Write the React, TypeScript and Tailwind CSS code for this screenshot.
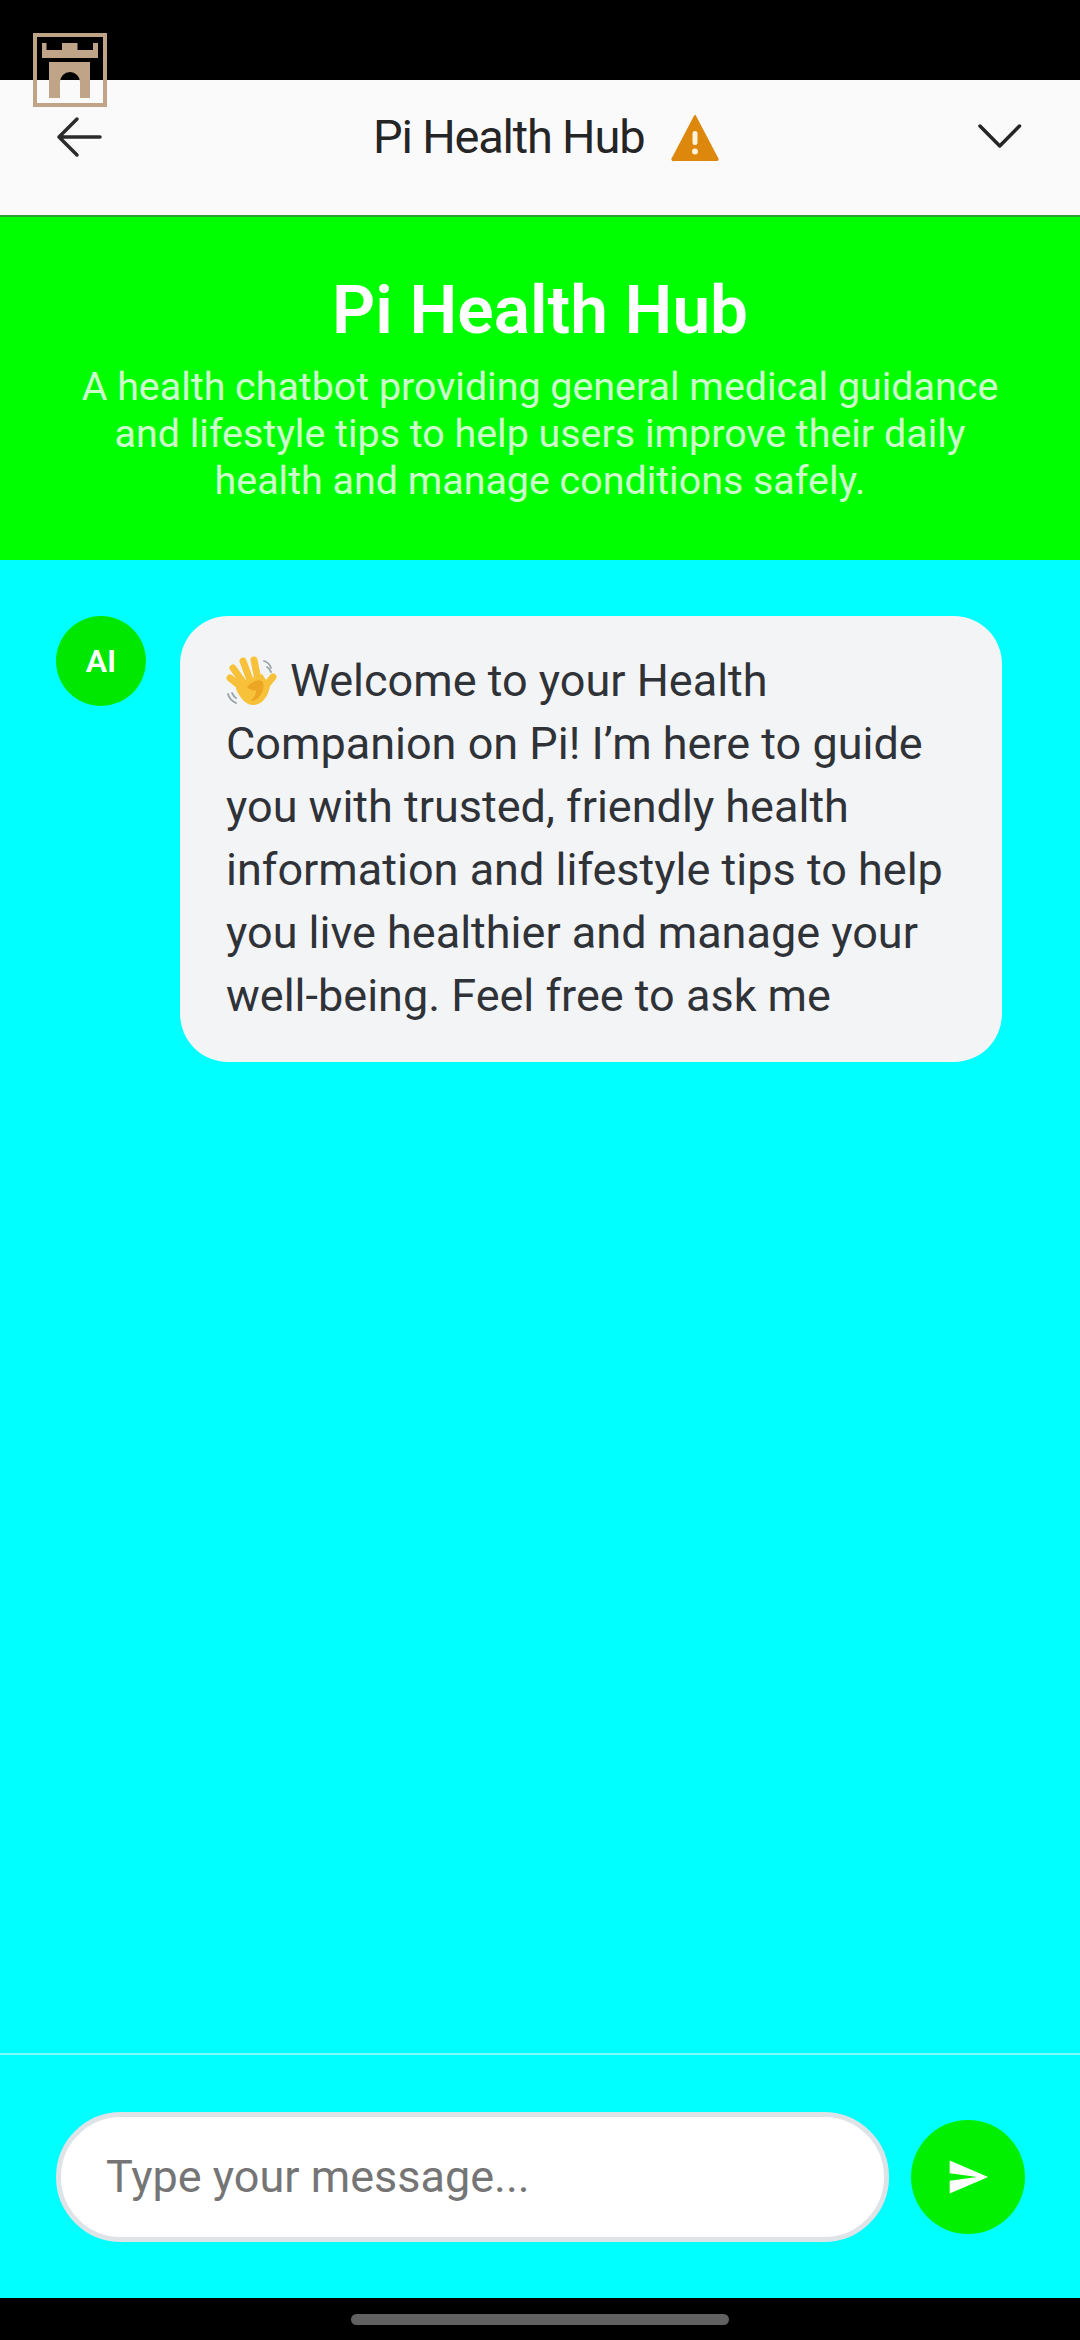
import React from 'react';

const roboto = "font-['Roboto',sans-serif]";

function CastleLogo() {
    return (
        <svg className="absolute left-[33px] top-[33px]" width="74" height="74" viewBox="0 0 74 74">
            <rect x="2" y="2" width="70" height="70" fill="none" stroke="#c0a488" strokeWidth="4" />
            <path d="M9 10h4.500v7H29v-7h15.500v7H60v-7h5v15H9z" fill="#c0a488" />
            <path d="M16 29h41v36H47V49a10 10 0 0 0-20 0v16H16z" fill="#c0a488" />
        </svg>
    );
}

function WaveEmoji() {
    return (
        <svg className="inline-block align-[-11px] mr-[12px]" width="52" height="51" viewBox="0 0 52 51">
            <path
                d="M38 5c3 1 6 3 7 7M41 11c2 1 3 3 4 5M2 38c1 4 4 7 8 9M6 37c1 2 2 4 4 5"
                fill="none"
                stroke="#9aa3a8"
                strokeWidth="1.800"
                strokeLinecap="round"
            />
            <g fill="none" stroke="#f8c13a" strokeWidth="7" strokeLinecap="round">
                <path d="M28 4l4 20M17 5l7 19M7 12l10 14M4 22l11 9" />
                <path d="M47 21l-9 11" />
            </g>
            <path d="M12 27 36 18l8 12c-2 12-9 19-17 19-7 0-13-7-17-16z" fill="#f8c13a" />
            <path d="M21 31c5-5 10-8 15-6 3 4 1 12-3 16-3 3-6 4-8 4 3-3 5-7 5-11-3 1-6 0-9-3z" fill="#eda524" />
        </svg>
    );
}

export default function App() {
    return (
        <div className={`relative flex flex-col h-[2340px] w-[1080px] overflow-hidden bg-black ${roboto}`}>
            <CastleLogo />

            <div className="h-[80px] shrink-0" />

            <header className="h-[137px] shrink-0 flex items-center pb-[22px] bg-[#fafafa] border-b-2 border-[#2e9e2e]">
                <svg className="ml-[56px]" width="46" height="42" viewBox="0 0 46 42" fill="none" stroke="#2b2b2b" strokeWidth="3.500" strokeLinecap="round" strokeLinejoin="round">
                    <path d="M44 21H3M21 3 3 21l18 18" />
                </svg>
                <span className="ml-[271px] w-[272px] whitespace-nowrap text-[47px] leading-none font-normal tracking-[-1.200px] text-[#252525]">Pi Health Hub</span>
                <svg className="ml-[25px] mt-[3px]" width="50" height="50" viewBox="0 0 50 50">
                    <path d="M25 3 47 45a1 1 0 0 1-1 2H4a1 1 0 0 1-1-2z" fill="#dd870c" stroke="#dd870c" strokeWidth="2" strokeLinejoin="round" />
                    <rect x="22.500" y="18" width="5" height="14" rx="2.500" fill="#fff3dc" />
                    <circle cx="25" cy="38.500" r="3" fill="#fff3dc" />
                </svg>
                <svg className="ml-[257px]" width="46" height="28" viewBox="0 0 46 28" fill="none" stroke="#252525" strokeWidth="3.500" strokeLinecap="round" strokeLinejoin="round">
                    <path d="M3 3l19.750 20L42.500 3" />
                </svg>
            </header>

            <section className="h-[343px] shrink-0 bg-[#00ff00] text-white text-center flex flex-col items-center pt-[53px]">
                <h1 className="text-[67.500px] leading-[80px] font-semibold">Pi Health Hub</h1>
                <p className="mt-[13px] w-[960px] text-[39.400px] leading-[47px] text-white/80">
                    A health chatbot providing general medical guidance and lifestyle tips to help users improve their daily health and manage conditions safely.
                </p>
            </section>

            <main className="flex-1 flex items-start gap-[34px] bg-[#00ffff] pl-[56px] pt-[56px]">
                <div className="w-[90px] h-[90px] shrink-0 rounded-full bg-[#00e800] flex items-center justify-center text-white text-[32px] font-semibold">
                    AI
                </div>
                <div className="w-[822px] rounded-[48px] bg-[#f3f4f6] px-[46px] pt-[33px] pb-[35px] text-[45px] leading-[63px] text-[#2f3237]">
                    <WaveEmoji />
                    Welcome to your Health Companion on Pi! I’m here to guide you with trusted, friendly health information and lifestyle tips to help you live healthier and manage your well-being. Feel free to ask me
                </div>
            </main>

            <footer className="h-[245px] shrink-0 flex items-center gap-[22px] bg-[#00ffff] pl-[56px] border-t-2 border-[#7ffbff]">
                <input
                    readOnly
                    placeholder="Type your message..."
                    className="w-[833px] h-[130px] rounded-[65px] bg-white border-[5px] border-[#dde3e6] px-[45px] text-[45px] outline-none placeholder:text-[#757575]"
                />
                <button className="w-[114px] h-[114px] rounded-full bg-[#00f000] flex items-center justify-center">
                    <svg width="44" height="44" viewBox="0 0 24 24" fill="#fff">
                        <path d="M2.010 21 23 12 2.010 3 2 10l15 2-15 2z" />
                    </svg>
                </button>
            </footer>

            <div className="h-[42px] shrink-0 flex items-start justify-center pt-[16px]">
                <div className="w-[378px] h-[11px] rounded-full bg-[#616161]" />
            </div>
        </div>
    );
}
